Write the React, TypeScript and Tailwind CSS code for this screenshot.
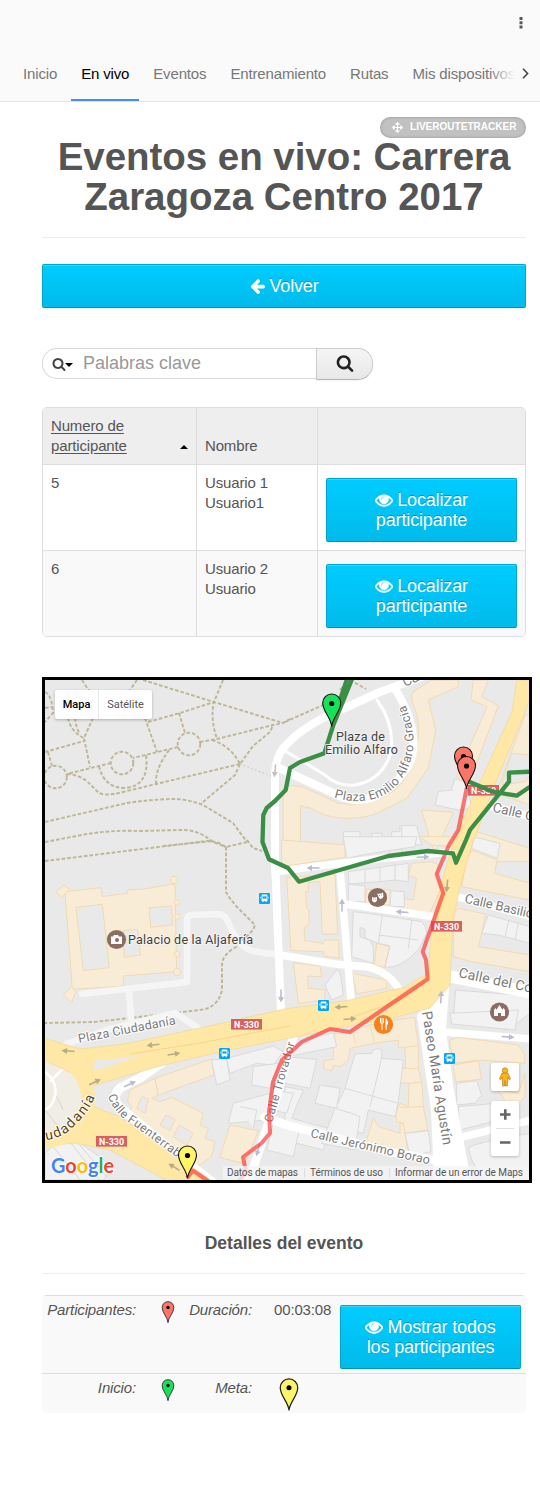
import React from "react";
import { FaArrowsAlt } from "react-icons/fa";

const ROBOTO = "Roboto, sans-serif";

function Glyph({ d, className, color = "currentColor", bold = 0 }: { d: string; className: string; color?: string; bold?: number }) {
  return (
    <svg viewBox="0 0 1792 1792" className={className} fill={color} stroke={color} strokeWidth={bold} aria-hidden="true">
      <path d={d} />
    </svg>
  );
}

const EYE =
  "M1664 960q-152-236-381-353 61 104 61 225 0 185-131.5 316.5t-316.5 131.5-316.5-131.5-131.5-316.5q0-121 61-225-229 117-381 353 133 205 333.5 326.5t434.5 121.5 434.5-121.5 333.5-326.5zm-720-384q0-20-14-34t-34-14q-125 0-214.5 89.5t-89.5 214.5q0 20 14 34t34 14 34-14 14-34q0-86 61-147t147-61q20 0 34-14t14-34zm848 384q0 34-20 69-140 230-376.5 368.5t-499.5 138.5-499.5-139-376.5-368q-20-35-20-69t20-69q140-229 376.5-368t499.5-139 499.5 139 376.5 368q20 35 20 69z";
const SEARCH =
  "M1216 832q0-185-131.5-316.5t-316.5-131.5-316.5 131.5-131.5 316.5 131.5 316.5 316.5 131.5 316.5-131.5 131.5-316.5zm512 832q0 52-38 90t-90 38q-54 0-90-38l-343-342q-179 124-399 124-143 0-273.5-55.5t-225-150-150-225-55.5-273.5 55.5-273.5 150-225 225-150 273.5-55.5 273.5 55.5 225 150 150 225 55.5 273.5q0 220-124 399l343 343q37 37 37 90z";
const ARROW_LEFT =
  "M1664 896v128q0 53-32.5 90.5t-84.5 37.5h-704l293 294q38 36 38 90t-38 90l-75 76q-37 37-90 37-52 0-91-37l-651-652q-37-37-37-90 0-52 37-91l651-650q38-38 91-38 52 0 90 38l75 74q38 38 38 91t-38 91l-293 293h704q52 0 84.5 37.5t32.5 90.5z";

const PIN = "M10 33.5C9.6 25 1 18.5 1 10A9 9 0 0 1 19 10C19 18.5 10.4 25 10 33.5Z";

function Pin({ color, className }: { color: string; className: string }) {
  return (
    <svg viewBox="0 0 20 34" className={className}>
      <path d={PIN} fill={color} stroke="#222" strokeWidth="1.3" />
      <circle cx="10" cy="10" r="2.6" fill="#000" />
    </svg>
  );
}

function MapPin({ x, y, color }: { x: number; y: number; color: string }) {
  return (
    <g transform={`translate(${x - 10} ${y - 33})`}>
      <path d={PIN} fill={color} stroke="#111" strokeWidth="1.1" />
      <circle cx="10" cy="10.5" r="2.6" fill="#000" />
    </g>
  );
}

function Tile({ x, y, children }: { x: number; y: number; children: React.ReactNode }) {
  return <g transform={`translate(${x} ${y}) scale(0.33333)`}>{children}</g>;
}

const tan = { fill: "#f9ecd6", stroke: "#f0dab2", strokeWidth: 3 };
const grey = { fill: "#f2f2f2", stroke: "#dadada", strokeWidth: 3 };
const street = { fill: "none", stroke: "#fff", strokeLinejoin: "round" as const, strokeLinecap: "round" as const };

function Shapes({ paths, look }: { paths: string[]; look: { fill: string; stroke: string; strokeWidth: number } }) {
  return (
    <g {...look}>
      {paths.map((d) => (
        <path key={d} d={d} />
      ))}
    </g>
  );
}

function RoadBadge({ x, y, w = 31 }: { x: number; y: number; w?: number }) {
  return (
    <g>
      <rect x={x} y={y} width={w} height="10.6" fill="#d8605f" />
      <text x={x + w / 2} y={y + 8.6} textAnchor="middle" fontSize="9.3" fontWeight="700" fill="#fff" textLength={w - 6} lengthAdjust="spacingAndGlyphs">
        N-330
      </text>
    </g>
  );
}

function BusStop({ x, y }: { x: number; y: number }) {
  return (
    <g transform={`translate(${x} ${y})`}>
      <rect width="11" height="11" rx="1.2" fill="#04a6f5" />
      <path d="M3.6 1.6h3.8q1 0 1 1v5.4h-.7v1h-1.2v-1h-2v1H3.3v-1h-.7V2.6q0-1 1-1z" fill="#fff" />
      <path d="M3.4 3.4h4.2v2.2H3.4z" fill="#04a6f5" />
      <path d="M1.7 3.8v1.6M9.3 3.8v1.6" stroke="#fff" strokeWidth=".8" />
    </g>
  );
}

function Arrow({ x, y, r, color = "#b9bdd2" }: { x: number; y: number; r: number; color?: string }) {
  return (
    <g transform={`translate(${x} ${y}) rotate(${r})`} stroke={color} fill={color}>
      <path d="M-6.5 0H2" strokeWidth="1.6" />
      <path d="M1-3L6.500 0L1 3Z" stroke="none" />
    </g>
  );
}

function CityMap() {
  return (
    <svg viewBox="45 680 484 500" className="block h-[500px] w-[484px]" fontFamily={ROBOTO}>
      <defs>
        <path id="gracia" d="M334 797.500Q362 806 384 795C405 784 416 757 413 735Q411 715 401 696" />
        <path id="fuenterrabia" d="M108 1096 Q114 1114 133 1125 L186 1164" />
        <path id="ciudadania" d="M46 1140 Q64 1138 75 1125 Q91 1110 96 1094" />
      </defs>
      <rect x="45" y="680" width="484" height="500" fill="#e9e9e9" />

      {/* park paths */}
      <g fill="none" stroke="#bdb693" strokeWidth="1.9" strokeDasharray="3.600 2">
        <path d="M82 680L90 692M137 680L130 690M143 680L214 702L283 723L290 719M223 680L214 702Q210 718 217 739" />
        <path d="M148 722L180 713L214 702M145 718L157 752M179 713L185 733M200 742L217 739L273 725L283 723M178 747L133 758M111 763L67 774" />
        <path d="M45 752L84 741M93 718L84 738L90 767M68 718Q71 732 84 738M75 718Q76 728 80 734M48 752L52 766M45 692Q52 695 53 713L45 722M45 708L52 707" />
        <circle cx="189" cy="744" r="11.300" />
        <circle cx="122" cy="763" r="11.300" />
        <circle cx="55.500" cy="777" r="11.300" />
        <path d="M99 766Q104 788 125 788Q150 786 146 755M67 774C85 775 90 785 98 792Q103 797 123 792L156 784L240 764M156 784Q155 768 170 749" />
        <path d="M212 740Q231 746 240 764L253 746L270 732L273 725M240 764L235 775L203 802" />
        <path d="M45 822L127 803Q153 799 177 799Q190 800 203 805L233 823L247 842M45 842L87 834Q112 830 140 831L180 830Q198 829 213 842L226 847" />
        <path d="M45 861L207 841L217 842L226 847L247 842M163 846L213 841M247 840L253 848L262 851M226 847L226 892Q229 898 237 907L255 925L253 930L236 947Q222 955 222 965L222 990Q218 1008 200 1010L94 1022L45 1023" />
        <path d="M285 722L332 701M340 690L349 680M350 680L366 689" />
      </g>
      <path d="M240 764L271 776" stroke="#d0cdbf" strokeWidth="1.500" strokeDasharray="1.500 2.500" />

      {/* palace */}
      <Tile x={40} y={840}>
        <g {...tan}>
          <path fillRule="evenodd" d="M75 155L183 143L187 170L262 160V150L315 147L395 132L405 135L410 395L250 408V438L97 448ZM108 202L187 193L208 383L130 392ZM327 203L395 198L398 255L332 262ZM248 272L293 268L302 345L253 352Z" />
          <path d="M47 155L72 135L88 148L65 172ZM70 465L95 440L108 455L95 488Z" />
          <circle cx="402" cy="120" r="11" />
          <circle cx="411" cy="188" r="8" />
          <circle cx="412" cy="230" r="8" />
          <circle cx="411" cy="288" r="8" />
          <circle cx="411" cy="342" r="8" />
          <circle cx="411" cy="396" r="11" />
        </g>
      </Tile>
      <g fill="none" stroke="#f5f5f5" strokeWidth="6.500" strokeLinejoin="round" strokeLinecap="round">
        <path d="M82 994L187 982V920Q187 915 192 915L218 914Q225 914 229 924Q238 945 250 950Q262 954 276 954M129 990L131 1020" />
        <path d="M66 1044L110 1029L175 1013L198 1028M131 1010V1024" />
      </g>

      {/* buildings around the plaza */}
      <Tile x={285} y={675}>
        <Shapes
          look={tan}
          paths={[
            "M440 15L385 50Q375 65 385 90Q408 140 398 200Q392 290 330 345Q250 400 160 385Q100 355 50 335L0 330L-6 345V510H46V390L68 400V395L100 412Q140 430 190 430Q250 430 290 408L365 370L430 280L452 165L430 75L520 35V15Z",
            "M565 15L558 75L606 95L515 305L552 325L640 92L590 65L610 15Z",
            "M410 405L505 412L450 530L440 510Z",
            "M720 120L735 120V240L680 235L650 330L720 320L735 300V390L650 360L625 380Z",
            "M575 470L735 520V560H545Z",
          ]}
        />
        <Shapes
          look={grey}
          paths={[
            "M510 310L545 325L560 400L520 405L450 390L460 350L500 345Z",
            "M175 470H225V495H260V475H290V485H320V470H345V452H395L410 510H175Z",
            "M290 485V530M350 455V530M230 495V530",
          ]}
        />
      </Tile>
      <Tile x={285} y={840}>
        <Shapes
          look={tan}
          paths={[
            "M-10 0L180 15V52L-10 80Z",
            "M5 112L150 103L158 282H112L105 125L70 128V155H62L65 205L72 210V255L58 262V302L115 310L118 300L160 300L163 355L115 348V335L18 332Z",
            "M380 70L440 65L460 75L455 100L465 150L435 218H355V175L385 180L395 115L370 108Z",
            "M245 148H315V195H240Z",
            "M275 310L314 320L298 382L268 375Z",
            "M25 368L105 378L110 410L68 408L70 445L120 450V480L40 490Z",
            "M202 400L305 420V445L215 462Z",
            "M560 30L637 60L628 100L735 130V180L530 140L545 60Z",
            "M505 220L520 205L602 222L590 280L580 320L735 345V395L560 365L505 350Z",
            "M400 -10L530 -10L500 20L440 15Z",
          ]}
        />
        <Shapes
          look={grey}
          paths={[
            "M175 -10H395L390 20L260 40L185 55Z",
            "M190 95L370 70V125L330 120L285 125L192 132ZM240 90V130M285 82V125M330 75V122",
            "M190 133L240 137V185H190ZM318 152L358 155V200L315 200Z",
            "M205 215L250 220L410 245Q425 260 425 280L400 330Q350 385 300 382L315 318L280 310L240 295V268L225 262V290L255 300L265 322V370L200 350Z",
            "M292 225L280 310M380 240L370 325M280 285L400 300",
            "M120 435L155 390L165 395L175 465L140 480Z",
            "M565 -10L645 10L637 55L560 25Z",
            "M610 225L735 260V310L640 285L590 280ZM672 240L660 290M700 250L690 300",
            "M512 450L695 465L735 470V520L670 570L505 540Z",
          ]}
        />
      </Tile>
      <Tile x={285} y={1010}>
        <Shapes
          look={tan}
          paths={[
            "M145 72L190 65L255 45L330 30L388 22L400 105V175L410 215L415 290L428 360L358 370L355 340L335 335L332 310L345 280L370 290L372 220L340 218L335 175L362 172L360 112L340 112V90L265 100L195 115L190 150L165 170L145 165L140 183L115 175L118 152L145 148V130Z",
            "M205 70L212 100M255 45L268 98M362 112L398 107M335 175H402M372 220L410 216M345 292L415 290",
            "M265 325L280 350L345 370V340H355L372 440L240 405Z",
            "M493 90L520 82L700 105L718 130L720 160L585 150L505 160Z",
            "M505 165L580 152L590 208L512 215Z",
            "M640 240L700 250L720 190V260L680 300Z",
          ]}
        />
        <Shapes
          look={grey}
          paths={[
            "M0 130L65 88L145 68L155 110L20 138Z",
            "M0 140L95 148L75 235L0 220Z",
            "M260 130Q270 108 290 120V145L355 150L340 275L330 320L250 300L235 370L140 350L150 300L180 235L210 132Z",
            "M290 145L255 290M180 235L340 280",
            "M105 225L165 235L155 295L90 280Z",
            "M0 230L55 240L40 275L20 325L130 355L115 420L35 400L0 390Z",
            "M150 295L200 310L225 320L210 420L110 400Z",
            "M360 370L430 362L438 425L375 438Z",
            "M515 220L575 212L590 255L570 280L515 285Z",
            "M520 290L630 280L640 330L525 360Z",
            "M550 415Q560 400 735 370V520H600L560 450Z",
            "M495 10L700 0L690 60L500 42Z",
          ]}
        />
      </Tile>
      <Tile x={40} y={1010}>
        <circle cx="12" cy="265" r="125" fill="#f0ede4" stroke="none" />
        <path d="M15 185Q70 230 30 290L15 300M30 215L70 175" fill="none" stroke="#fff" strokeWidth="7" />
        <Shapes
          look={tan}
          paths={[
            "M270 240L345 205L355 255L335 265L360 275L395 262L490 310L480 345L505 355L495 385L525 395L515 440L470 470L365 410L300 345L262 315L275 290L262 275Z",
            "M345 205L515 147L522 195L355 255Z",
            "M570 345L655 362L615 462L540 442Z",
          ]}
        />
        <path d="M305 260L325 268L315 310L290 295ZM378 315L405 328L390 362L360 345ZM418 345L460 370L440 405L400 380Z" fill="#e9e9e9" stroke="#f0dab2" strokeWidth="3" />
        <Shapes
          look={grey}
          paths={[
            "M515 150L560 145L570 210L530 225Z",
            "M560 145L700 108L730 125L700 165L650 160L570 190Z",
            "M640 170L715 160L690 235L635 225Z",
            "M580 280L690 250L680 330L565 340Z",
            "M600 290L650 300L640 355M700 240L760 250L740 310L700 300Z",
            "M700 340L780 350L760 440L680 420Z",
            "M15 430L80 370L220 470L190 510H15Z",
          ]}
        />
        <path d="M15 300L180 510M15 380L120 510M50 260L70 300M90 370L200 500" fill="none" stroke="#c9c9c9" strokeWidth="2" />
      </Tile>

      {/* streets */}
      <g {...street}>
        <path strokeWidth="8" d="M432 673L380 692L325 717Q300 730 288 743Q275 755 275 775L275 860L281 1012" />
        <path strokeWidth="8" d="M279 768L335 794Q355 805 376 796Q418 772 413 737Q411 714 394 687" />
        <path strokeWidth="3" d="M377 700Q395 725 391 752Q383 780 355 785Q338 787 325 775L287 752" />
        <path strokeWidth="7.500" d="M275 872L310 867L385 858L452 852M340 870L343 905L351 1000M345 904L436 917M280 955L335 964L368 967Q382 970 392 980L400 990" />
        <path strokeWidth="7.500" d="M458 897L532 917M480 803L532 817M444 1032L532 1039M458 1138L532 1120" />
        <path strokeWidth="12" d="M448 976L532 993" />
        <path strokeWidth="8.500" d="M294 1034L276 1100L248 1184M264 1117L290 1126L390 1152L440 1161" />
        <path strokeWidth="9" d="M163 1062L140 1078L120 1088Q112 1096 118 1106L180 1157L220 1188" />
      </g>
      <path d="M417 1015L450 975L446 1030L453 1085L471 1180H434L431 1110Z" fill="#fff" />

      {/* main road */}
      <g fill="#ffe7a5" stroke="#f2d998" strokeWidth=".8">
        <path d="M517 680L512 712L482 778L454 840L441 884L432 925L428 973L405 987L350 1000L285 1009L200 1028L125 1044L80 1049L44 1038V1060L90 1082L95 1085L160 1066L220 1052L285 1039L340 1028L390 1019L430 1008L450 985L453 920L461 882L472 845L498 777L525 712L530 698V680Z" />
        <path d="M90 1105L120 1117L215 1183H172L110 1150L75 1143L44 1146V1133L70 1127Z" />
      </g>
      <path d="M96 1059Q125 1060 148 1053L104 1068Q98 1071 93 1068Z" fill="#e9e9e9" />
      <circle cx="45" cy="1098" r="43" fill="none" stroke="#ffe7a5" strokeWidth="14" />
      <path d="M290 1026L200 1043L130 1054M350 1018L400 1000L425 983" fill="none" stroke="#f2d58b" strokeWidth=".9" />

      <Arrow x={68} y={1051} r={185} color="#b8ab88" />
      <Arrow x={153} y={1045} r={174} color="#b8ab88" />
      <Arrow x={174} y={1054} r={-9} color="#b8ab88" />
      <Arrow x={95} y={1082} r={-25} color="#b8ab88" />
      <Arrow x={130} y={1084} r={-25} />
      <Arrow x={174} y={1167} r={212} color="#b8ab88" />
      <Arrow x={313} y={868} r={180} />
      <Arrow x={423} y={857} r={-2} />
      <Arrow x={342} y={905} r={-90} />
      <Arrow x={402} y={912} r={184} />
      <Arrow x={447} y={886} r={96} color="#b8ab88" />
      <Arrow x={441} y={997} r={-88} />
      <Arrow x={281} y={996} r={90} />
      <Arrow x={341} y={1007} r={176} color="#b8ab88" />
      <Arrow x={350} y={1019} r={-5} color="#b8ab88" />
      <Arrow x={508} y={1037} r={5} />
      <Arrow x={275} y={771} r={96} color="#c5c3b8" />
      <Arrow x={258} y={1150} r={105} />

      <RoadBadge x={468} y={785} />
      <RoadBadge x={431} y={921} />
      <RoadBadge x={231} y={1019} />
      <RoadBadge x={96} y={1136} />
      <BusStop x={259} y={893} />
      <BusStop x={318} y={1000} />
      <BusStop x={219} y={1048} />
      <BusStop x={444} y={1053} />

      {/* street names */}
      <g fill="#7a7a7a" fontSize="12" fontWeight="400" stroke="#fff" strokeWidth="2" paintOrder="stroke" strokeLinejoin="round">
        <text><textPath href="#gracia" fontSize="12.500" textLength="153">Plaza Emilio Alfaro Gracia</textPath></text>
        <text><textPath href="#fuenterrabia" fontSize="12" textLength="94">Calle Fuenterrab</textPath></text>
        <text transform="translate(405 687) rotate(-24)" fontSize="13.500">Ca</text>
        <text transform="translate(492 811.500) rotate(13)" fontSize="13.500">Calle C</text>
        <text transform="translate(464 902.500) rotate(13)" fontSize="13" textLength="70">Calle Basilio</text>
        <text transform="translate(458 977) rotate(12)" fontSize="14" textLength="75">Calle del Co</text>
        <text transform="translate(79 1043) rotate(-11)" fontSize="12.500" textLength="99">Plaza Ciudadanía</text>
        <text transform="translate(422 1012) rotate(81)" fontSize="14" textLength="135">Paseo María Agustín</text>
        <text transform="translate(310 1137) rotate(13)" fontSize="12.500" textLength="122">Calle Jerónimo Borao</text>
        <text transform="translate(272 1123) rotate(-74)" textLength="83">Calle Trovador</text>
        <text fill="#5b4317" fontSize="14"><textPath href="#ciudadania" textLength="68">udadanía</textPath></text>
      </g>

      {/* routes */}
      <g fill="none" stroke="#ff3636" strokeOpacity=".68" strokeWidth="4" strokeLinejoin="round">
        <path d="M466.700 788L458.300 830L449 845L436.700 874L443.300 893L422.700 951.700L426 960L427.700 979L385 1008L350 1032L330 1029L301.700 1042L282 1060L273 1082L269 1112L270 1133L261.700 1143L243 1157L246 1172L238 1182M208 1181L193 1170.700L187 1178" />
      </g>
      <g fill="none" stroke="#3a8e45" strokeWidth="4.300" strokeLinejoin="round">
        <path d="M347 679L332 724M352 679L333 726L324.300 753.300L300 762L290 768L285.700 790L275 801L266.700 808L263.300 815L262.500 842L269 859.300L288 868L299 881.700L388.300 856L428 851L453 853.300L456 862.700L466 840L470 830L509 781.700V772.700L530 771.700" />
        <path d="M465 780L493 791.700L516.700 795.700L530 786.700" />
      </g>

      {/* places */}
      <g fill="#3f3f3f" stroke="#f5f5f5" strokeWidth="1.500" paintOrder="stroke" fontSize="12.500">
        <text x="336" y="740.500" textLength="49">Plaza de</text>
        <text x="325" y="753.500" textLength="73">Emilio Alfaro</text>
        <text x="128" y="943.500" textLength="125">Palacio de la Aljafería</text>
      </g>
      <circle cx="116.500" cy="939.500" r="9.600" fill="#8b6d62" />
      <path d="M111 936.500h2l1-1.500h4l1 1.500h3v7.500h-11z" fill="#fff" />
      <circle cx="117" cy="940" r="2" fill="#8b6d62" />
      <circle cx="377.500" cy="897.500" r="9.600" fill="#8b6d62" />
      <path d="M372 897q2.500 1 5 0v3.500q-2.500 4-5 0zM377 893.500q2.500 1 6-1l.5 4q-2 4-4.500 1.500z" fill="#fff" />
      <path d="M373.300 899.200h.8M375.500 899.200h.8M379 895.500h.8M381.300 895h.8" stroke="#8b6d62" strokeWidth=".8" />
      <circle cx="499.500" cy="1012" r="9.600" fill="#8b6d62" />
      <path d="M494 1016v-6l1.500-2 1.500 2v-1l2.500-4 2.500 4v1l1.500-2 1.500 2v6h-4v-3h-3v3z" fill="#fff" />
      <circle cx="383.500" cy="1024.500" r="9.600" fill="#f4831f" />
      <path d="M380.500 1018v4q0 1.500 1 1.500M383.500 1018v4q0 1.500-1 1.500M382 1018v12" fill="none" stroke="#fff" strokeWidth="1" />
      <path d="M385.500 1030v-12q2.500 1 2.500 6.500h-1.300v5.500z" fill="#fff" />

      <MapPin x={331.700} y={726} color="#16e35a" />
      <MapPin x={463.500} y={779} color="#fd7567" />
      <MapPin x={466.500} y={788.500} color="#fd7567" />
      <MapPin x={187.500} y={1178} color="#fdf569" />

      {/* footer strip */}
      <rect x="223" y="1166" width="306" height="14" fill="#f5f5f5" fillOpacity=".78" />
      <path d="M304.500 1168v10M389.500 1168v10" stroke="#ddd" />
      <g fill="#555" fontSize="10">
        <text x="227" y="1176.300" textLength="71">Datos de mapas</text>
        <text x="310" y="1176.300" textLength="73">Términos de uso</text>
        <text x="395" y="1176.300" textLength="128">Informar de un error de Maps</text>
      </g>
      <g fontFamily="Lato, sans-serif" fontSize="20" fontWeight="700" stroke="#fff" strokeWidth="1.500" paintOrder="stroke">
        <text x="51" y="1172.500" textLength="63" lengthAdjust="spacingAndGlyphs">
          <tspan fill="#4285f4">G</tspan><tspan fill="#ea4335">o</tspan><tspan fill="#fbbc05">o</tspan><tspan fill="#4285f4">g</tspan><tspan fill="#34a853">l</tspan><tspan fill="#ea4335">e</tspan>
        </text>
      </g>
    </svg>
  );
}

function BlueButton({ children, className }: { children: React.ReactNode; className: string }) {
  return (
    <button
      className={`block rounded-[2px] border border-[#00a7cc] border-b-[#0092b3] bg-gradient-to-b from-[#00ccff] to-[#00bbeb] text-center text-[18px] leading-5 tracking-[-0.15px] text-white shadow-[inset_0_1px_0_rgba(255,255,255,0.2),0_1px_2px_rgba(0,0,0,0.05)] [text-shadow:0_-1px_0_rgba(0,0,0,0.25)] ${className}`}
    >
      {children}
    </button>
  );
}

const tabs = ["Inicio", "En vivo", "Eventos", "Entrenamiento", "Rutas", "Mis dispositivos"];
const rows = [
  { id: "5", name: ["Usuario 1", "Usuario1"], bg: "bg-white" },
  { id: "6", name: ["Usuario 2", "Usuario"], bg: "bg-[#f9f9f9]" },
];

export default function App() {
  return (
    <div className="h-[1494px] w-[540px] overflow-hidden bg-white font-['Liberation_Sans',Arial,sans-serif] text-[15px] leading-5 tracking-[-0.15px] text-[#555]">
      <header className="flex h-[102px] flex-col border-b border-[#e4e4e4] bg-[#fafafa]">
        <div className="flex h-[46px] justify-end pr-[17px] pt-[17px]">
          <svg viewBox="0 0 4 12" className="h-3 w-1" fill="#5a5560">
            <path d="M.5 0h3v3h-3zM.5 4.300h3v3h-3zM.5 8.600h3v3h-3z" />
          </svg>
        </div>
        <div className="flex h-[55px]">
          <nav className="relative ml-[13px] flex w-[502px] gap-1 overflow-hidden text-[#777]">
            {tabs.map((t) => (
              <a
                key={t}
                className={
                  t === "En vivo"
                    ? "h-[55px] shrink-0 whitespace-nowrap border-b-2 border-[#4a8ce8] px-[10px] pt-[18px] text-black"
                    : "h-[55px] shrink-0 whitespace-nowrap px-[10px] pt-[18px]"
                }
              >
                {t}
              </a>
            ))}
            <span className="absolute right-0 top-3 h-8 w-[26px] bg-gradient-to-r from-transparent to-[#fafafa]" />
          </nav>
          <svg viewBox="0 0 7 11" className="ml-[7px] mt-[22px] h-[11px] w-[7px]" fill="none" stroke="#444" strokeWidth="1.600">
            <path d="M1 .8L5.600 5.500L1 10.200" />
          </svg>
        </div>
      </header>

      <main className="pl-[42px]">
        <div className="flex w-[484px] justify-end pt-[15px]">
          <span className="flex h-[21px] w-[146px] items-center rounded-full bg-[#c1c1c1] pl-3 text-white shadow-[inset_0_0_3px_rgba(0,0,0,0.25)]">
            <FaArrowsAlt size={11} />
            <b className="-mt-[2px] ml-[7px] whitespace-nowrap text-[10px] leading-[18px] tracking-[0.02px]">LIVEROUTETRACKER</b>
          </span>
        </div>
        <h1 className="-mt-[1px] h-[101px] w-[484px] border-b border-[#eee] text-center text-[38.500px] font-bold leading-10 tracking-[-0.04px] text-[#555]">
          Eventos en vivo: Carrera Zaragoza Centro 2017
        </h1>

        <BlueButton className="mt-[26px] h-[44px] w-[484px]">
          <span className="inline-flex items-center gap-[3px] pt-[2px]">
            <Glyph d={ARROW_LEFT} className="h-[18px] w-[17px]" />
            Volver
          </span>
        </BlueButton>

        <form className="mt-[40px] flex h-8 w-[331px]">
          <div className="flex h-[31px] w-[274px] items-center rounded-l-[15px] border border-r-0 border-[#d9d9d9] pl-[9px]">
            <Glyph d={SEARCH} className="h-[14px] w-[14px]" color="#444" />
            <svg viewBox="0 0 8 4" className="-ml-px mt-[3px] h-1 w-2"><path d="M0 0h8L4 4z" /></svg>
            <span className="-mt-[2px] ml-[10px] text-[18px] tracking-normal text-[#999]">Palabras clave</span>
          </div>
          <div className="flex h-8 w-[57px] items-center justify-center rounded-r-[15px] border border-[#ccc] border-b-[#b3b3b3] bg-gradient-to-b from-[#f5f5f5] to-[#e8e8e8] shadow-[0_1px_2px_rgba(0,0,0,0.05)]">
            <Glyph d={SEARCH} className="-mt-[2px] h-[18px] w-[18px]" color="#222" />
          </div>
        </form>

        <section className="mt-[27px] w-[484px] overflow-hidden rounded-[5px] border border-[#ddd]">
          <div className="flex h-[56px] bg-[#eee]">
            <div className="flex w-[153px] items-end justify-between px-2 pb-2">
              <span className="w-[90px] underline underline-offset-2">Numero de participante</span>
              <svg viewBox="0 0 8 4" className="mb-[7px] h-1 w-2"><path d="M0 4h8L4 0z" /></svg>
            </div>
            <div className="flex w-[121px] items-end border-l border-[#ddd] px-2 pb-2">Nombre</div>
            <div className="w-[208px] border-l border-[#ddd]" />
          </div>
          {rows.map((r) => (
            <div key={r.id} className={`flex h-[86px] border-t border-[#ddd] ${r.bg}`}>
              <div className="w-[153px] px-2 pt-2">{r.id}</div>
              <div className="w-[121px] border-l border-[#ddd] px-2 pt-2">
                {r.name[0]}
                <br />
                {r.name[1]}
              </div>
              <div className="w-[208px] border-l border-[#ddd] px-2 pt-[13px]">
                <BlueButton className="h-[64px] w-[191px]">
                  <Glyph d={EYE} bold={70} className="mr-1 inline h-[18px] w-[18px] align-[-3px]" />
                  Localizar
                  <br />
                  participante
                </BlueButton>
              </div>
            </div>
          ))}
        </section>

        <section className="relative mt-10 h-[506px] w-[490px] overflow-hidden border-[3px] border-black tracking-normal">
          <CityMap />
          <div className="absolute left-[10px] top-[10px] flex h-[29px] w-[97px] rounded-[2px] bg-white font-['Roboto'] text-[11px] leading-[29px] shadow-[0_1px_3px_rgba(0,0,0,0.25)]">
            <span className="w-11 border-r border-[#e6e6e6] text-center font-medium text-black">Mapa</span>
            <span className="flex-1 text-center text-[#565656]">Satélite</span>
          </div>
          <div className="absolute left-[446px] top-[383px] flex h-7 w-7 items-center justify-center rounded-[2px] bg-white shadow-[0_1px_3px_rgba(0,0,0,0.25)]">
            <svg viewBox="0 0 14 20" className="h-5 w-[14px]">
              <path d="M4 6h6l2.500 6-1.300.6L9.800 10l-.5 9H7.400V14h-.8v5H4.700l-.5-9-1.400 2.600L1.500 12z" fill="#f9b41f" stroke="#c07c14" strokeWidth=".7" />
              <circle cx="7" cy="3.500" r="2.700" fill="#f9b41f" stroke="#c07c14" strokeWidth=".7" />
            </svg>
          </div>
          <div className="absolute left-[446px] top-[421px] flex h-[55px] w-7 flex-col items-center rounded-[2px] bg-white shadow-[0_1px_3px_rgba(0,0,0,0.25)]">
            <svg viewBox="0 0 28 55" className="h-[55px] w-7" stroke="#666" strokeWidth="2.600">
              <path d="M9 13.500h10.500M14.300 8.200v10.600M9 41.500h10.500" />
              <path d="M5 27.500h18" stroke="#e0e0e0" strokeWidth="1" />
            </svg>
          </div>
        </section>

        <h3 className="mt-[50px] h-[41px] w-[484px] border-b border-[#eee] text-center text-[17.500px] font-bold leading-5 tracking-normal text-[#555]">
          Detalles del evento
        </h3>

        <section className="mt-[21px] w-[484px] overflow-hidden rounded-[5px] bg-[#f9f9f9]">
          <div className="flex h-[78px] border-t border-[#ddd] pt-1">
            <i className="w-[94px] whitespace-nowrap text-right">Participantes:</i>
            <span className="flex w-[64px] justify-center pt-[1px]">
              <Pin color="#fd7567" className="h-[22px] w-[14px]" />
            </span>
            <i className="flex w-[52px] justify-end whitespace-nowrap">Duración:</i>
            <span className="w-[88px] pl-[22px]">00:03:08</span>
            <BlueButton className="mt-[5px] h-[64px] w-[181px]">
              <Glyph d={EYE} bold={70} className="mr-1 inline h-[18px] w-[18px] align-[-3px]" />
              Mostrar todos
              <br />
              los participantes
            </BlueButton>
          </div>
          <div className="flex h-[40px] border-t border-[#ddd] pt-1">
            <i className="w-[94px] text-right">Inicio:</i>
            <span className="flex w-[64px] justify-center pt-[1px]">
              <Pin color="#16e35a" className="h-[22px] w-[14px]" />
            </span>
            <i className="w-[52px] text-right">Meta:</i>
            <Pin color="#fdf569" className="ml-[27px] h-[33px] w-[20px]" />
          </div>
        </section>
      </main>
    </div>
  );
}
